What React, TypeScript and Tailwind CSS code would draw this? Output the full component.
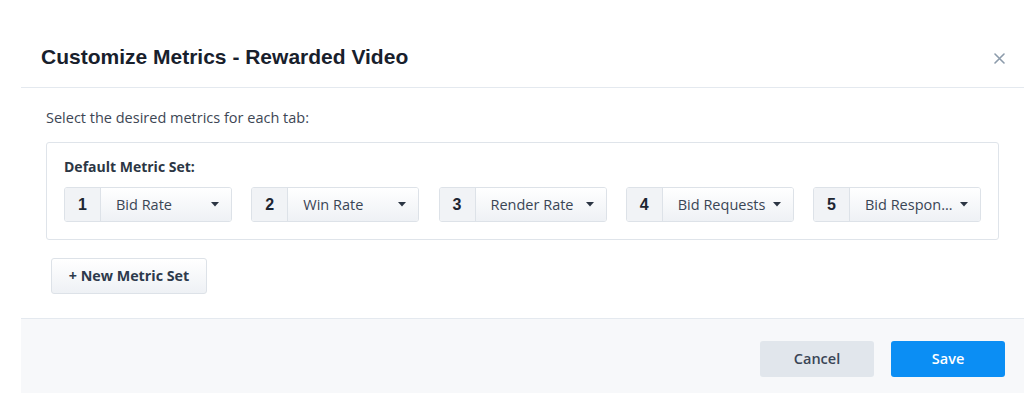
import React from 'react';

const metrics = [
  { n: 1, label: 'Bid Rate' },
  { n: 2, label: 'Win Rate' },
  { n: 3, label: 'Render Rate' },
  { n: 4, label: 'Bid Requests' },
  { n: 5, label: 'Bid Respon…' },
];

const Caret = () => (
  <svg width="8" height="5" viewBox="0 0 8 5" className="shrink-0">
    <path d="M0 0 L8 0 L4 4.5 Z" fill="#2b3543" />
  </svg>
);

const MetricSelect = ({ n, label }: { n: number; label: string }) => (
  <div className="w-[168px] h-[35px] flex border border-[#dde2e8] rounded-[3px] overflow-hidden">
    <div className="w-[36px] shrink-0 flex items-center justify-center bg-[#f1f3f6] border-r border-[#dde2e8] text-[16px] font-bold text-[#1d2531] font-['Liberation_Sans',Arial,sans-serif]">
      {n}
    </div>
    <div className="flex-1 flex items-center justify-between pl-[15px] pr-[12px] bg-gradient-to-b from-white to-[#eef1f5] text-[14.5px] text-[#3a4555] whitespace-nowrap">
      <span>{label}</span>
      <Caret />
    </div>
  </div>
);

export default function App() {
  return (
    <div className="w-[1024px] h-[393px] bg-white overflow-hidden font-['Open_Sans',sans-serif]">
      <div className="ml-[21px] h-full flex flex-col">
        {/* Header */}
        <div className="h-[88px] shrink-0 flex items-start justify-between pl-[20px] pr-[19px] pt-[43px] border-b border-[#e4e9ef]">
          <h1 className="text-[21px] leading-[28px] font-bold text-[#18202c] font-['Liberation_Sans',Arial,sans-serif]">
            Customize Metrics - Rewarded Video
          </h1>
          <svg width="11" height="11" viewBox="0 0 11 11" className="mt-[10px]">
            <path d="M1 1 L10 10 M10 1 L1 10" stroke="#8c9bab" strokeWidth="1.6" strokeLinecap="round" />
          </svg>
        </div>

        {/* Body */}
        <div className="px-[25px] pt-[21px]">
          <p className="text-[14.5px] leading-[18px] text-[#3d4654]">Select the desired metrics for each tab:</p>
          <div className="mt-[15px] border border-[#dfe4ea] rounded-[3px] px-[17px] pt-[15px] pb-[17px]">
            <div className="text-[14px] leading-[18px] font-bold text-[#2c3644]">Default Metric Set:</div>
            <div className="mt-[11px] flex justify-between">
              {metrics.map((m) => (
                <MetricSelect key={m.n} n={m.n} label={m.label} />
              ))}
            </div>
          </div>
          <button className="mt-[18px] ml-[5px] w-[156px] h-[36px] border border-[#dde2e8] rounded-[3px] bg-gradient-to-b from-white to-[#eef1f5] text-[14.3px] font-bold text-[#2d3a4c]">
            + New Metric Set
          </button>
        </div>

        {/* Footer */}
        <div className="mt-[24px] flex-1 bg-[#f7f8fa] border-t border-[#e4e9ef] flex justify-end items-start gap-[17px] pt-[22px] pr-[19px]">
          <button className="w-[114px] h-[36px] rounded-[3px] bg-[#e1e6ec] text-[14.5px] font-semibold text-[#3a4556]">
            Cancel
          </button>
          <button className="w-[114px] h-[36px] rounded-[3px] bg-[#0b8ef4] text-[14.5px] font-semibold text-white">
            Save
          </button>
        </div>
      </div>
    </div>
  );
}
